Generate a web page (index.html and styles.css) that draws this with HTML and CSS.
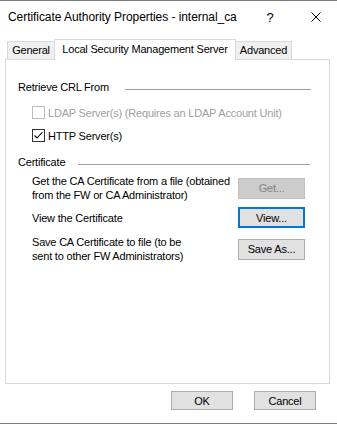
FILE: index.html
```html
<!DOCTYPE html>
<html>
<head>
    <title>Certificate Authority Properties</title>
    <link rel="stylesheet" href="styles.css">
</head>
<body>
    <div class="window">
        <div class="titlebar">
            <span class="title">Certificate Authority Properties - internal_ca</span>
            <span class="caption-btn help">?</span>
            <span class="caption-btn close">
                <svg width="10" height="10" viewBox="0 0 10 10">
                    <path d="M0.5 0.5 L9.5 9.5 M9.5 0.5 L0.5 9.5" stroke="#000" stroke-width="1" fill="none"/>
                </svg>
            </span>
        </div>

        <div class="tabs">
            <div class="tab tab-general">General</div>
            <div class="tab tab-active">Local Security Management Server</div>
            <div class="tab tab-advanced">Advanced</div>
        </div>

        <div class="panel">
            <div class="group-head group-crl">
                <span>Retrieve CRL From</span>
                <div class="rule"></div>
            </div>

            <div class="check-row check-ldap disabled">
                <span class="checkbox"></span>
                <span>LDAP Server(s) (Requires an LDAP Account Unit)</span>
            </div>
            <div class="check-row check-http">
                <span class="checkbox">
                    <svg width="11" height="11" viewBox="0 0 11 11">
                        <polyline points="1.5,5.5 4,8 9.5,2" stroke="#000" stroke-width="1.1" fill="none"/>
                    </svg>
                </span>
                <span>HTTP Server(s)</span>
            </div>

            <div class="group-head group-cert">
                <span>Certificate</span>
                <div class="rule"></div>
            </div>

            <div class="action-row row-get">
                <div class="action-text">Get the CA Certificate from a file (obtained<br>from the FW or CA Administrator)</div>
                <button class="btn" disabled>Get...</button>
            </div>
            <div class="action-row row-view">
                <div class="action-text">View the Certificate</div>
                <button class="btn focused">View...</button>
            </div>
            <div class="action-row row-save">
                <div class="action-text">Save CA Certificate to file (to be<br>sent to other FW Administrators)</div>
                <button class="btn">Save As...</button>
            </div>
        </div>

        <div class="footer">
            <button class="btn btn-footer">OK</button>
            <button class="btn btn-footer">Cancel</button>
        </div>
    </div>
</body>
</html>
```

FILE: styles.css
```css
body {
    margin: 0;
    padding: 0;
    background-color: #fff;
    font-family: "Liberation Sans", Arial, sans-serif;
    font-size: 11px;
    color: #000;
}

.window {
    width: 337px;
    height: 424px;
    box-sizing: border-box;
    border-top: 1px solid #7a7a7a;
    border-bottom: 1px solid #7a7a7a;
    display: flex;
    flex-direction: column;
}

/* title bar */
.titlebar {
    height: 38px;
    display: flex;
    align-items: flex-start;
    padding-top: 9px;
    padding-left: 8px;
    box-sizing: border-box;
}

.title {
    font-size: 12px;
    line-height: 14px;
    letter-spacing: -0.06px;
}

.caption-btn {
    display: flex;
    justify-content: center;
    align-items: center;
    height: 14px;
}

.help {
    margin-left: auto;
    width: 50px;
    font-size: 13px;
}

.close {
    width: 42px;
}

/* tabs */
.tabs {
    display: flex;
    align-items: flex-end;
    height: 21px;
    padding-left: 7px;
    margin-bottom: -1px;
    position: relative;
    z-index: 1;
}

.tab {
    box-sizing: border-box;
    height: 18px;
    margin-bottom: 1px;
    border: 1px solid #d9d9d9;
    border-bottom: none;
    background-color: #f0f0f0;
    text-align: center;
    line-height: 17px;
    letter-spacing: -0.2px;
    white-space: nowrap;
}

.tab-general {
    width: 47px;
    border-right: none;
}

.tab-active {
    width: 182px;
    height: 21px;
    margin-bottom: 0;
    background-color: #fff;
    line-height: 19px;
}

.tab-advanced {
    width: 56px;
    border-left: none;
}

/* panel */
.panel {
    margin-left: 5px;
    width: 325px;
    height: 325px;
    box-sizing: border-box;
    border: 1px solid #d9d9d9;
    padding-top: 20px;
}

.group-head {
    display: flex;
    align-items: center;
    height: 14px;
    line-height: 14px;
    padding-left: 12px;
    padding-right: 18px;
    letter-spacing: -0.2px;
}

.rule {
    flex: 1;
    border-top: 1px solid #a0a0a0;
    margin-top: 5px;
}

.group-crl .rule {
    margin-left: 16px;
}

.group-cert {
    margin-top: 13px;
}

.group-cert .rule {
    margin-left: 13px;
    margin-right: 1px;
}

.check-row {
    display: flex;
    align-items: center;
    height: 13px;
    padding-left: 26px;
    letter-spacing: -0.2px;
}

.check-ldap {
    margin-top: 12px;
}

.check-http {
    margin-top: 10px;
}

.checkbox {
    width: 13px;
    height: 13px;
    box-sizing: border-box;
    border: 1px solid #333;
    background-color: #fff;
    margin-right: 3px;
    display: flex;
}

.disabled {
    color: #a0a0a0;
}

.disabled .checkbox {
    border-color: #bcbcbc;
}

.action-row {
    display: flex;
    align-items: center;
    padding-left: 26px;
    padding-right: 24px;
    letter-spacing: -0.2px;
}

.action-text {
    flex: 1;
    line-height: 14px;
    white-space: nowrap;
}

.row-get {
    margin-top: 5px;
}

.row-view {
    margin-top: 5px;
    height: 21px;
}

.row-save {
    margin-top: 7px;
}

.btn {
    width: 67px;
    height: 21px;
    box-sizing: border-box;
    padding: 0;
    background-color: #e1e1e1;
    border: 1px solid #adadad;
    font-family: "Liberation Sans", Arial, sans-serif;
    font-size: 11px;
    letter-spacing: -0.2px;
    color: #000;
}

.btn:disabled {
    background-color: #cccccc;
    border-color: #bfbfbf;
    color: #838383;
}

.btn.focused {
    border: 2px solid #0078d7;
}

/* dialog buttons */
.footer {
    display: flex;
    justify-content: flex-end;
    gap: 21px;
    padding-right: 21px;
    margin-top: 7px;
}

.btn-footer {
    width: 62px;
    height: 19px;
}
```
